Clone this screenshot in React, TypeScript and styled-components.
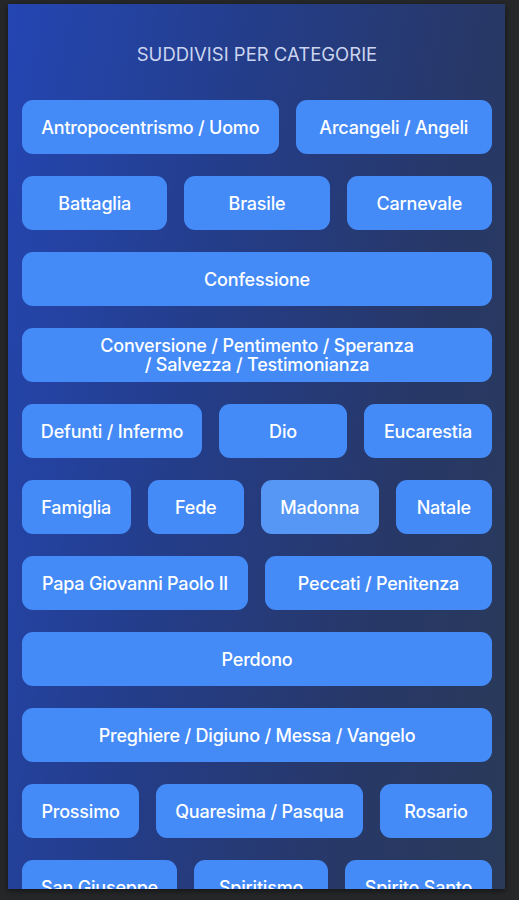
import React from 'react';
import styled, { createGlobalStyle } from 'styled-components';

const GlobalStyle = createGlobalStyle`
  html, body {
    margin: 0;
    padding: 0;
    background: #262729;
    font-family: Inter, 'Noto Sans', 'Liberation Sans', sans-serif;
  }
`;

const Frame = styled.div`
  width: 519px;
  height: 900px;
  box-sizing: border-box;
  padding: 4px 14px 11px 8px;
  display: flex;
`;

const Panel = styled.div`
  flex: 1;
  overflow: hidden;
  background: linear-gradient(100deg, #2446b3 0%, #243d88 40%, #27386a 70%, #2a3a58 100%);
  box-shadow: 0 2px 6px rgba(0, 0, 0, 0.5);
  padding: 0 13px 0 14px;
  display: flex;
  flex-direction: column;
`;

const Title = styled.h1`
  flex-shrink: 0;
  margin: 39px 0 0;
  height: 57px;
  font-size: 18.5px;
  line-height: 22px;
  font-weight: 400;
  color: #cbd5ef;
  text-align: center;
`;

const Grid = styled.div`
  flex-shrink: 0;
  display: flex;
  flex-direction: column;
  gap: 22px;
`;

const Row = styled.div`
  display: flex;
  gap: 17px;
`;

const Chip = styled.button<{ grow: number; active?: boolean }>`
  flex: ${({ grow }) => grow} 1 0;
  min-width: 0;
  height: 54px;
  border: 0;
  border-radius: 11px;
  background: ${({ active }) => (active ? '#5697f6' : '#448bf8')};
  color: #ffffff;
  font-family: inherit;
  font-size: 18px;
  font-weight: 500;
  line-height: 19px;
  letter-spacing: -0.2px;
  white-space: pre-line;
  padding: 0;
  cursor: pointer;
`;

type Item = { label: string; w: number; active?: boolean };

const rows: Item[][] = [
  [
    { label: 'Antropocentrismo / Uomo', w: 256 },
    { label: 'Arcangeli / Angeli', w: 196 },
  ],
  [
    { label: 'Battaglia', w: 145 },
    { label: 'Brasile', w: 145 },
    { label: 'Carnevale', w: 145 },
  ],
  [{ label: 'Confessione', w: 1 }],
  [{ label: 'Conversione / Pentimento / Speranza\n/ Salvezza / Testimonianza', w: 1 }],
  [
    { label: 'Defunti / Infermo', w: 180 },
    { label: 'Dio', w: 128 },
    { label: 'Eucarestia', w: 128 },
  ],
  [
    { label: 'Famiglia', w: 108 },
    { label: 'Fede', w: 96 },
    { label: 'Madonna', w: 117, active: true },
    { label: 'Natale', w: 96 },
  ],
  [
    { label: 'Papa Giovanni Paolo II', w: 226 },
    { label: 'Peccati / Penitenza', w: 227 },
  ],
  [{ label: 'Perdono', w: 1 }],
  [{ label: 'Preghiere / Digiuno / Messa / Vangelo', w: 1 }],
  [
    { label: 'Prossimo', w: 117 },
    { label: 'Quaresima / Pasqua', w: 207 },
    { label: 'Rosario', w: 112 },
  ],
  [
    { label: 'San Giuseppe', w: 155 },
    { label: 'Spiritismo', w: 134 },
    { label: 'Spirito Santo', w: 147 },
  ],
];

const App: React.FC = () => (
  <>
    <GlobalStyle />
    <Frame>
      <Panel>
        <Title>SUDDIVISI PER CATEGORIE</Title>
        <Grid>
          {rows.map((row, i) => (
            <Row key={i}>
              {row.map((item) => (
                <Chip key={item.label} grow={item.w} active={item.active}>
                  {item.label}
                </Chip>
              ))}
            </Row>
          ))}
        </Grid>
      </Panel>
    </Frame>
  </>
);

export default App;
